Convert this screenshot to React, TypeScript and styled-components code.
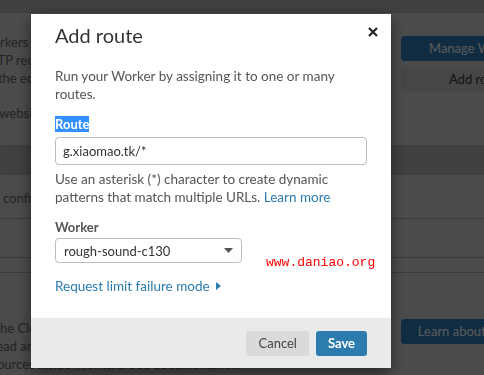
import React from "react";
import styled, { createGlobalStyle } from "styled-components";

const GlobalStyle = createGlobalStyle`
  html, body {
    margin: 0;
    padding: 0;
    overflow: hidden;
  }
  body {
    font-family: Lato, "Liberation Sans", sans-serif;
    background: #d8d8d8;
  }
`;

// page behind the dialog
const Page = styled.div`
  position: relative;
  width: 484px;
  height: 375px;
  overflow: hidden;
  color: #666;
  font-size: 13px;
  line-height: 18px;
`;

const TopStrip = styled.div`
  height: 13px;
  background: #b8b8b8;
`;

const Section = styled.div<{ $top: number; $bottom: number }>`
  display: grid;
  grid-template-columns: 405px 153px;
  column-gap: 16px;
  margin-left: -20px;
  padding: ${(p) => p.$top}px 0 ${(p) => p.$bottom}px;
  white-space: nowrap;
`;

const TextCol = styled.div`
  display: flex;
  flex-direction: column;
  gap: 17px;
`;

const ActionCol = styled.div<{ $top: number }>`
  display: flex;
  flex-direction: column;
  gap: 6px;
  padding-top: ${(p) => p.$top}px;
`;

const PageButton = styled.div<{ $primary?: boolean }>`
  height: 25px;
  line-height: 25px;
  text-align: center;
  border-radius: 4px;
  font-size: 13px;
  background: ${(p) => (p.$primary ? "#2f7fc0" : "#c8c8c8")};
  color: ${(p) => (p.$primary ? "#fff" : "#333")};
`;

const Band = styled.div`
  height: 30px;
  background: #b8b8b8;
`;

const ListRow = styled.div<{ $height: number }>`
  height: ${(p) => p.$height}px;
  box-sizing: border-box;
  padding: 14px 0 0 3px;
  border-bottom: 1px solid #a8a8a8;
  white-space: nowrap;
`;

// dialog
const Overlay = styled.div`
  position: fixed;
  inset: 0;
  background: rgba(0, 0, 0, 0.65);
  display: flex;
  align-items: flex-start;
  padding: 14px 0 0 31px;
`;

const Modal = styled.div`
  width: 360px;
  background: #fff;
  box-shadow: 0 5px 15px rgba(0, 0, 0, 0.5);
  color: #555;
  font-size: 13.5px;
  line-height: 18px;
`;

const Body = styled.div`
  padding: 7px 24px 24px;
  display: flex;
  flex-direction: column;
`;

const Header = styled.div`
  display: flex;
  justify-content: space-between;
`;

const Title = styled.h2`
  margin: 0;
  font-size: 20px;
  line-height: 28px;
  font-weight: 400;
  color: #333;
`;

const Close = styled.button`
  margin: 6px -11px 0 0;
  padding: 0;
  border: 0;
  background: none;
  width: 10px;
  height: 10px;
  display: flex;
`;

const Intro = styled.p`
  margin: 18px 0 0;
`;

const Label = styled.div`
  margin-top: 13px;
  font-size: 13px;
  font-weight: 700;
  line-height: 16px;
  color: #555;
`;

const Selected = styled.span`
  background: #3390ff;
  color: #fff;
`;

const Input = styled.div`
  margin-top: 5px;
  height: 28px;
  box-sizing: border-box;
  border: 1px solid #bdbdbd;
  border-radius: 4px;
  padding: 0 7px;
  font-size: 13px;
  line-height: 26px;
  color: #333;
`;

const Help = styled.p`
  margin: 5px 0 0;
`;

const Link = styled.a`
  color: #2c7cb0;
  text-decoration: none;
  display: inline-flex;
  align-items: center;
  gap: 6px;
`;

const SelectRow = styled.div`
  display: flex;
  align-items: flex-start;
  margin-top: 3px;
`;

const Select = styled.div`
  flex-shrink: 0;
  width: 187px;
  height: 25px;
  box-sizing: border-box;
  border: 1px solid #bdbdbd;
  border-radius: 4px;
  padding: 0 8px;
  display: flex;
  align-items: center;
  justify-content: space-between;
  font-size: 13px;
  color: #333;
`;

const Watermark = styled.span`
  flex-shrink: 0;
  margin: 17px 0 0 24px;
  font-family: "Liberation Mono", monospace;
  font-size: 13px;
  line-height: 16px;
  color: #f00;
  white-space: nowrap;
`;

const More = styled.div`
  margin-top: 7px;
  line-height: 16px;
`;

const Footer = styled.div`
  height: 50px;
  background: #e9ebeb;
  display: flex;
  justify-content: flex-end;
  align-items: center;
  gap: 7px;
  padding: 0 24px;
`;

const Button = styled.button<{ $primary?: boolean }>`
  height: 25px;
  padding: 0 12px;
  border: 0;
  border-radius: 3px;
  font-family: inherit;
  font-size: 13px;
  font-weight: ${(p) => (p.$primary ? 700 : 400)};
  background: ${(p) => (p.$primary ? "#2c7cb0" : "#d9dadb")};
  color: ${(p) => (p.$primary ? "#fff" : "#444")};
`;

export default function App() {
  return (
    <>
      <GlobalStyle />
      <Page>
        <TopStrip />
        <Section $top={20} $bottom={23}>
          <TextCol>
            <div>
              Workers lets you run serverless JavaScript code on
              <br />
              HTTP requests, deployed to Cloudflare data centers
              <br />
              on the edge of the network, close to your visitors.
            </div>
            <div>for website routes that trigger your Worker scripts.</div>
          </TextCol>
          <ActionCol $top={3}>
            <PageButton $primary>Manage Workers</PageButton>
            <PageButton>Add route</PageButton>
          </ActionCol>
        </Section>
        <Band />
        <ListRow $height={44}>configured routes for this zone</ListRow>
        <ListRow $height={39} />
        <ListRow $height={11} />
        <Section $top={46} $bottom={0}>
          <TextCol>
            <div>
              to the Cloudflare Workers documentation to
              <br />
              thread and run code, and use the browser APIs and
              <br />
              resources inside Workers. See documentation
            </div>
          </TextCol>
          <ActionCol $top={0}>
            <PageButton $primary>Learn about Workers</PageButton>
          </ActionCol>
        </Section>
      </Page>

      <Overlay>
        <Modal>
          <Body>
            <Header>
              <Title>Add route</Title>
              <Close aria-label="Close">
                <svg width="10" height="10" viewBox="0 0 10 10">
                  <path d="M1 1L9 9M9 1L1 9" stroke="#222" strokeWidth="2.2" />
                </svg>
              </Close>
            </Header>
            <Intro>Run your Worker by assigning it to one or many routes.</Intro>
            <Label>
              <Selected>Route</Selected>
            </Label>
            <Input>g.xiaomao.tk/*</Input>
            <Help>
              Use an asterisk (*) character to create dynamic patterns that
              match multiple URLs. <Link href="#">Learn more</Link>
            </Help>
            <Label>Worker</Label>
            <SelectRow>
              <Select>
                rough-sound-c130
                <svg width="9" height="5" viewBox="0 0 9 5">
                  <path d="M0 0H9L4.5 5Z" fill="#555" />
                </svg>
              </Select>
              <Watermark>www.daniao.org</Watermark>
            </SelectRow>
            <More>
              <Link href="#">
                Request limit failure mode
                <svg width="5" height="8" viewBox="0 0 5 8">
                  <path d="M0 0L5 4L0 8Z" fill="#2c7cb0" />
                </svg>
              </Link>
            </More>
          </Body>
          <Footer>
            <Button>Cancel</Button>
            <Button $primary>Save</Button>
          </Footer>
        </Modal>
      </Overlay>
    </>
  );
}
